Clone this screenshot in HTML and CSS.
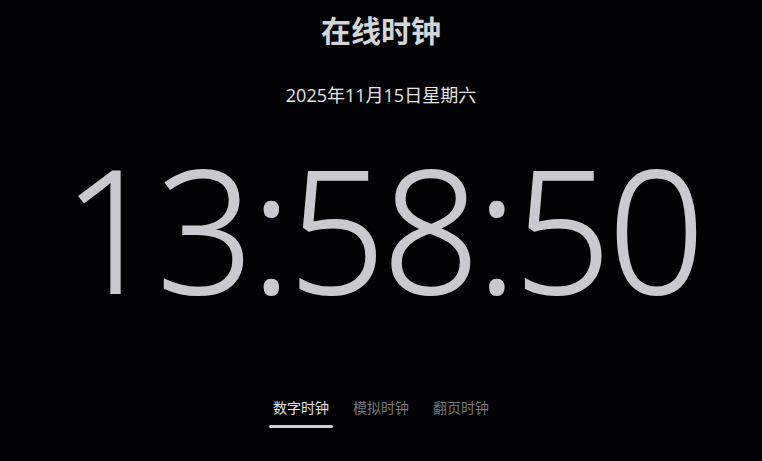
FILE: index.html
```html
<!DOCTYPE html>
<html lang="zh-CN">
<head>
<meta charset="utf-8">
<title>在线时钟</title>
<link rel="stylesheet" href="styles.css">
</head>
<body>
<main class="page">
  <h1 class="title">在线时钟</h1>
  <div class="date">2025年11月15日星期六</div>
  <div class="clock">13:58:50</div>
  <nav class="tabs">
    <span class="tab active">数字时钟</span>
    <span class="tab">模拟时钟</span>
    <span class="tab">翻页时钟</span>
  </nav>
</main>
</body>
</html>
```

FILE: styles.css
```css
html, body {
  margin: 0;
  padding: 0;
  background: #020204;
  height: 100%;
}
body {
  font-family: "Open Sans", "Noto Sans CJK SC", sans-serif;
  color: #e6e6ea;
}
.page {
  display: flex;
  flex-direction: column;
  align-items: center;
  height: 461px;
}
.title {
  margin: 9px 0 0;
  font-family: "Noto Sans CJK SC", sans-serif;
  font-size: 30px;
  font-weight: 700;
  line-height: 40px;
  color: #d4d5da;
}
.date {
  margin-top: 34px;
  font-size: 18px;
  line-height: 24px;
  color: #e4e5ea;
}
.clock {
  margin-top: 20px;
  padding-left: 3px;
  font-size: 170px;
  font-weight: 300;
  letter-spacing: -3px;
  line-height: 200px;
  color: #c9cacf;
  -webkit-text-stroke: 2px #c9cacf;
}
.tabs {
  margin-top: 70px;
  display: flex;
  gap: 16px;
}
.tab {
  font-family: "Noto Sans CJK SC", sans-serif;
  font-size: 14px;
  line-height: 20px;
  padding: 0 4px 11px;
  color: #77787c;
  position: relative;
}
.tab.active {
  color: #e4e5ea;
}
.tab.active::after {
  content: "";
  position: absolute;
  left: 0;
  right: 0;
  bottom: 0;
  height: 3px;
  border-radius: 2px;
  background: #d0d0d4;
}
```
